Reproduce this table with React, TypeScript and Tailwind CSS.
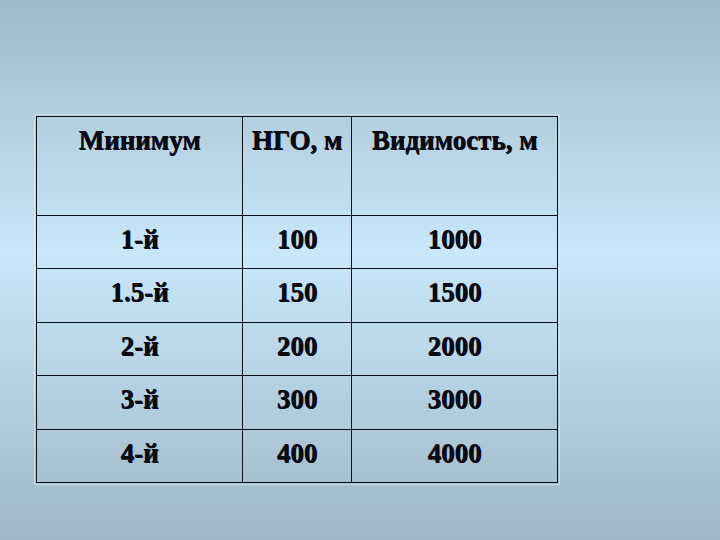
import React from 'react';

const rows = [
  ['1-й', '100', '1000'],
  ['1.5-й', '150', '1500'],
  ['2-й', '200', '2000'],
  ['3-й', '300', '3000'],
  ['4-й', '400', '4000'],
];

const cell = 'border-[1.5px] border-[#0b1018] align-top text-center pt-[8px] px-0 leading-[31px]';

const App = () => {
  return (
    <div
      className="w-[720px] h-[540px] overflow-hidden pt-[116px] pl-[36px] bg-[linear-gradient(180deg,#a0b9c9_0%,#c9e7f9_47%,#9fb7c6_100%)] text-[#0a0a14] text-[27px] font-bold [text-shadow:0.7px_0.5px_0_#0a0a14]"
      style={{ fontFamily: '"Liberation Serif", "Times New Roman", serif' }}
    >
      <table className="border-collapse table-fixed w-[521px] outline outline-1 outline-offset-1 outline-[#dce9f1]/60">
        <colgroup>
          <col className="w-[206px]" />
          <col className="w-[109px]" />
          <col className="w-[206px]" />
        </colgroup>
        <thead>
          <tr className="h-[99px]">
            <th className={cell + ' font-bold'}>Минимум</th>
            <th className={cell + ' font-bold whitespace-nowrap'}>НГО, м</th>
            <th className={cell + ' font-bold whitespace-nowrap'}>Видимость, м</th>
          </tr>
        </thead>
        <tbody>
          {rows.map((r) => (
            <tr key={r[0]} className="h-[53.4px]">
              {r.map((v, i) => (
                <td key={i} className={cell}>
                  {v}
                </td>
              ))}
            </tr>
          ))}
        </tbody>
      </table>
    </div>
  );
};

export default App;
